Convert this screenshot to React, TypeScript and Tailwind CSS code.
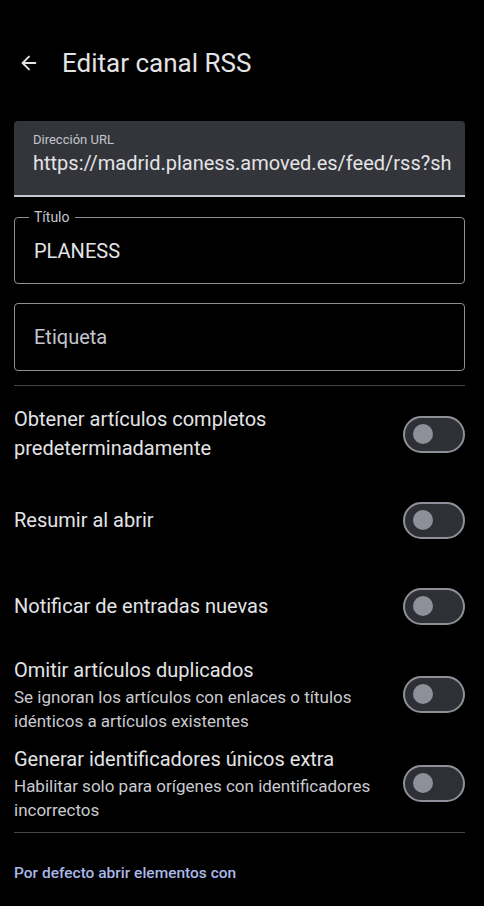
import { ArrowLeft } from 'lucide-react';

interface RowProps {
  title: string;
  subtitle?: string;
  height: string;
}

function Toggle() {
  return (
    <div className="w-[62px] h-[37px] shrink-0 rounded-full border-2 border-[#8e9099] bg-[#2f3036] flex items-center pl-[8px]">
      <div className="w-[20px] h-[20px] rounded-full bg-[#8e9099]" />
    </div>
  );
}

function SwitchRow({ title, subtitle, height }: RowProps) {
  return (
    <div className={`flex items-center justify-between gap-4 ${height}`}>
      <div className="flex-1">
        <div className="text-[20px] leading-[29px] text-[#e3e3e6]">{title}</div>
        {subtitle && (
          <div className="text-[17px] leading-[24px] text-[#c9cad0]">{subtitle}</div>
        )}
      </div>
      <Toggle />
    </div>
  );
}

export default function App() {
  return (
    <div
      className="w-[484px] h-[906px] bg-black overflow-hidden"
      style={{ fontFamily: 'Roboto, "Noto Sans", sans-serif' }}
    >
      <div className="flex items-center h-[56px] mt-[35px] pl-[18px]">
        <ArrowLeft className="w-[22px] h-[22px] text-[#e3e3e6]" strokeWidth={2} />
        <h1 className="ml-[22px] text-[26px] text-[#e3e3e6]">Editar canal RSS</h1>
      </div>

      <div className="pl-[14px] pr-[19px]">
        <div className="mt-[30px] h-[76px] rounded-t-[4px] bg-[#33353a] border-b-2 border-[#c4c6cf] pl-[19px] pr-[4px] pt-[10px] overflow-hidden">
          <div className="text-[13px] leading-[18px] text-[#c4c6cf]">Dirección URL</div>
          <div className="text-[20px] leading-[28px] text-[#e3e3e6] whitespace-nowrap">
            https://madrid.planess.amoved.es/feed/rss?sh
          </div>
        </div>

        <div className="relative mt-[20px] h-[67px] rounded-[4px] border border-[#8e9099] px-[19px] flex items-center">
          <span className="absolute -top-[10px] left-[14px] px-[5px] bg-black text-[14px] leading-[18px] text-[#c4c6cf]">
            Título
          </span>
          <span className="text-[20px] text-[#e3e3e6]">PLANESS</span>
        </div>

        <div className="mt-[19px] h-[68px] rounded-[4px] border border-[#8e9099] px-[19px] flex items-center">
          <span className="text-[20px] text-[#c4c6cf]">Etiqueta</span>
        </div>

        <div className="mt-[14px] h-px bg-[#45464c]" />

        <SwitchRow
          title="Obtener artículos completos predeterminadamente"
          height="h-[96px]"
        />
        <SwitchRow title="Resumir al abrir" height="h-[76px]" />
        <SwitchRow title="Notificar de entradas nuevas" height="h-[96px]" />
        <SwitchRow
          title="Omitir artículos duplicados"
          subtitle="Se ignoran los artículos con enlaces o títulos idénticos a artículos existentes"
          height="h-[80px]"
        />
        <SwitchRow
          title="Generar identificadores únicos extra"
          subtitle="Habilitar solo para orígenes con identificadores incorrectos"
          height="h-[98px]"
        />

        <div className="h-px bg-[#45464c]" />

        <div className="mt-[29px] text-[15.5px] font-medium text-[#aab8e8]">
          Por defecto abrir elementos con
        </div>
      </div>
    </div>
  );
}
